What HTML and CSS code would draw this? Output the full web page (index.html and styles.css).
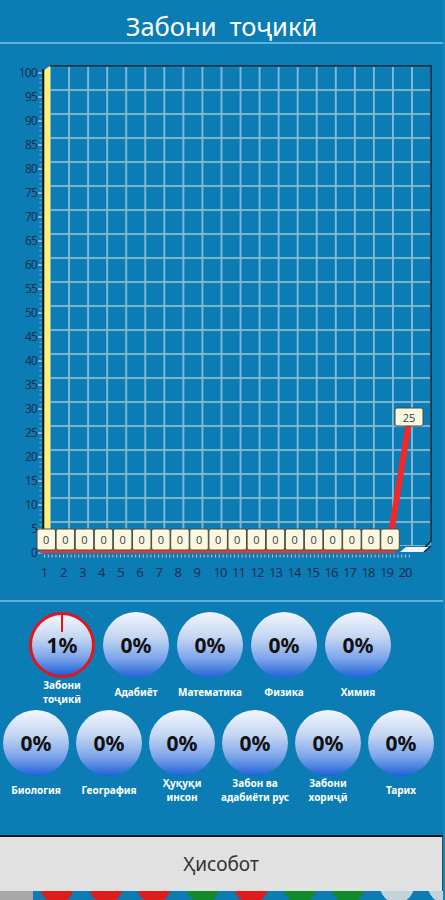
FILE: index.html
```html
<!DOCTYPE html>
<html>
<head>
<meta charset="utf-8">
<title>Забони тоҷикӣ</title>
<link rel="stylesheet" href="styles.css">
</head>
<body>
	<div class="app">
		<header class="title-bar">
			<h1 class="title">Забони&nbsp; тоҷикӣ</h1>
		</header>

		<div class="chart">
			<svg class="chart-svg" width="443" height="556" viewBox="0 44 443 556">
				<defs>
					<pattern id="grid" patternUnits="userSpaceOnUse" x="49.1" y="65.1" width="19.05" height="24">
						<rect class="grid-line" x="0" y="0" width="1.8" height="24"/>
						<rect class="grid-line" x="0" y="0" width="19.05" height="1.8"/>
					</pattern>
				</defs>
				<!-- back wall -->
				<rect x="50" y="66" width="381" height="480" fill="url(#grid)"/>
				<path class="plot-border" d="M50 66 H431 V541 L425 547"/>

				<!-- left wall + axis -->
				<path class="wall" d="M44 70 L50 66 V546 L44 551 Z"/>
				<line class="axis" x1="43.3" y1="69" x2="43.3" y2="553"/>
				<line class="axis-minor" x1="40.5" y1="73" x2="40.5" y2="553"/>
				<path class="axis-major" d="M38 73h4M38 97h4M38 121h4M38 145h4M38 169h4M38 193h4M38 217h4M38 241h4M38 265h4M38 289h4M38 313h4M38 337h4M38 361h4M38 385h4M38 409h4M38 433h4M38 457h4M38 481h4M38 505h4M38 529h4M38 553h4"/>

				<text class="y-label" x="37" y="77">100</text>
				<text class="y-label" x="37" y="101">95</text>
				<text class="y-label" x="37" y="125">90</text>
				<text class="y-label" x="37" y="149">85</text>
				<text class="y-label" x="37" y="173">80</text>
				<text class="y-label" x="37" y="197">75</text>
				<text class="y-label" x="37" y="221">70</text>
				<text class="y-label" x="37" y="245">65</text>
				<text class="y-label" x="37" y="269">60</text>
				<text class="y-label" x="37" y="293">55</text>
				<text class="y-label" x="37" y="317">50</text>
				<text class="y-label" x="37" y="341">45</text>
				<text class="y-label" x="37" y="365">40</text>
				<text class="y-label" x="37" y="389">35</text>
				<text class="y-label" x="37" y="413">30</text>
				<text class="y-label" x="37" y="437">25</text>
				<text class="y-label" x="37" y="461">20</text>
				<text class="y-label" x="37" y="485">15</text>
				<text class="y-label" x="37" y="509">10</text>
				<text class="y-label" x="37" y="533">5</text>
				<text class="y-label" x="37" y="557">0</text>

				<!-- floor -->
				<rect class="series-base" x="40" y="548" width="356" height="5"/>
				<line class="x-ticks" x1="44" y1="556" x2="412" y2="556"/>
				<path class="floor" d="M400 552 H424 L430 547 H406 Z"/>
				<path class="plot-border" d="M424 552 L431 546"/>

				<text class="x-label" x="44" y="577">1</text>
				<text class="x-label" x="63.1" y="577">2</text>
				<text class="x-label" x="82.2" y="577">3</text>
				<text class="x-label" x="101.3" y="577">4</text>
				<text class="x-label" x="120.4" y="577">5</text>
				<text class="x-label" x="139.5" y="577">6</text>
				<text class="x-label" x="158.6" y="577">7</text>
				<text class="x-label" x="177.7" y="577">8</text>
				<text class="x-label" x="196.8" y="577">9</text>
				<text class="x-label" x="220" y="577">10</text>
				<text class="x-label" x="238.5" y="577">11</text>
				<text class="x-label" x="257" y="577">12</text>
				<text class="x-label" x="275.5" y="577">13</text>
				<text class="x-label" x="294" y="577">14</text>
				<text class="x-label" x="312.5" y="577">15</text>
				<text class="x-label" x="331" y="577">16</text>
				<text class="x-label" x="349.5" y="577">17</text>
				<text class="x-label" x="368" y="577">18</text>
				<text class="x-label" x="386.5" y="577">19</text>
				<text class="x-label" x="405" y="577">20</text>

				<!-- series -->
				<line class="series-rise" x1="391" y1="534" x2="409" y2="422"/>

				<g class="box" transform="translate(37 529)"><rect width="18.5" height="21" rx="2"/><text x="9.25" y="14.5">0</text></g>
				<g class="box" transform="translate(56.1 529)"><rect width="18.5" height="21" rx="2"/><text x="9.25" y="14.5">0</text></g>
				<g class="box" transform="translate(75.2 529)"><rect width="18.5" height="21" rx="2"/><text x="9.25" y="14.5">0</text></g>
				<g class="box" transform="translate(94.3 529)"><rect width="18.5" height="21" rx="2"/><text x="9.25" y="14.5">0</text></g>
				<g class="box" transform="translate(113.4 529)"><rect width="18.5" height="21" rx="2"/><text x="9.25" y="14.5">0</text></g>
				<g class="box" transform="translate(132.5 529)"><rect width="18.5" height="21" rx="2"/><text x="9.25" y="14.5">0</text></g>
				<g class="box" transform="translate(151.6 529)"><rect width="18.5" height="21" rx="2"/><text x="9.25" y="14.5">0</text></g>
				<g class="box" transform="translate(170.7 529)"><rect width="18.5" height="21" rx="2"/><text x="9.25" y="14.5">0</text></g>
				<g class="box" transform="translate(189.8 529)"><rect width="18.5" height="21" rx="2"/><text x="9.25" y="14.5">0</text></g>
				<g class="box" transform="translate(208.9 529)"><rect width="18.5" height="21" rx="2"/><text x="9.25" y="14.5">0</text></g>
				<g class="box" transform="translate(228 529)"><rect width="18.5" height="21" rx="2"/><text x="9.25" y="14.5">0</text></g>
				<g class="box" transform="translate(247.1 529)"><rect width="18.5" height="21" rx="2"/><text x="9.25" y="14.5">0</text></g>
				<g class="box" transform="translate(266.2 529)"><rect width="18.5" height="21" rx="2"/><text x="9.25" y="14.5">0</text></g>
				<g class="box" transform="translate(285.3 529)"><rect width="18.5" height="21" rx="2"/><text x="9.25" y="14.5">0</text></g>
				<g class="box" transform="translate(304.4 529)"><rect width="18.5" height="21" rx="2"/><text x="9.25" y="14.5">0</text></g>
				<g class="box" transform="translate(323.5 529)"><rect width="18.5" height="21" rx="2"/><text x="9.25" y="14.5">0</text></g>
				<g class="box" transform="translate(342.6 529)"><rect width="18.5" height="21" rx="2"/><text x="9.25" y="14.5">0</text></g>
				<g class="box" transform="translate(361.7 529)"><rect width="18.5" height="21" rx="2"/><text x="9.25" y="14.5">0</text></g>
				<g class="box" transform="translate(380.8 529)"><rect width="18.5" height="21" rx="2"/><text x="9.25" y="14.5">0</text></g>
				<g class="box" transform="translate(395 408)"><rect width="28" height="18" rx="2"/><text x="14" y="13.5">25</text></g>
			</svg>
		</div>

		<div class="subjects">
			<div class="subject-row row-first">
				<div class="subject">
					<div class="gauge gauge-active">1%</div>
					<div class="subject-name">Забони<br>тоҷикӣ</div>
				</div>
				<div class="subject">
					<div class="gauge">0%</div>
					<div class="subject-name">Адабиёт</div>
				</div>
				<div class="subject">
					<div class="gauge">0%</div>
					<div class="subject-name">Математика</div>
				</div>
				<div class="subject">
					<div class="gauge">0%</div>
					<div class="subject-name">Физика</div>
				</div>
				<div class="subject">
					<div class="gauge">0%</div>
					<div class="subject-name">Химия</div>
				</div>
			</div>
			<div class="subject-row row-second">
				<div class="subject">
					<div class="gauge">0%</div>
					<div class="subject-name">Биология</div>
				</div>
				<div class="subject">
					<div class="gauge">0%</div>
					<div class="subject-name">География</div>
				</div>
				<div class="subject">
					<div class="gauge">0%</div>
					<div class="subject-name">Ҳуқуқи<br>инсон</div>
				</div>
				<div class="subject">
					<div class="gauge">0%</div>
					<div class="subject-name">Забон ва<br>адабиёти рус</div>
				</div>
				<div class="subject">
					<div class="gauge">0%</div>
					<div class="subject-name">Забони<br>хориҷӣ</div>
				</div>
				<div class="subject">
					<div class="gauge">0%</div>
					<div class="subject-name">Тарих</div>
				</div>
			</div>
		</div>

		<button class="report">Ҳисобот</button>

		<div class="tray">
			<div class="tray-gray"></div>
			<div class="tray-dots">
				<span class="dot dot-red"></span>
				<span class="dot dot-red"></span>
				<span class="dot dot-red"></span>
				<span class="dot dot-green"></span>
				<span class="dot dot-red"></span>
				<span class="dot dot-green"></span>
				<span class="dot dot-green"></span>
				<span class="dot dot-gray"></span>
				<span class="dot dot-gray"></span>
			</div>
		</div>
	</div>
</body>
</html>
```

FILE: styles.css
```css
body {
	margin: 0;
	background: #1587bb;
	font-family: "Noto Sans", "Open Sans", sans-serif;
}

.app {
	width: 443px;
	background: #0b7db4;
	display: flex;
	flex-direction: column;
}

/* header */
.title-bar {
	height: 44px;
	box-sizing: border-box;
	padding-top: 10px;
	border-bottom: 2px solid #5fb2db;
	text-align: center;
}

.title {
	margin: 0;
	font-size: 25.5px;
	font-weight: normal;
	line-height: 32px;
	color: #fff;
}

/* chart */
.chart {
	border-bottom: 2px solid #5fb2db;
}

.chart-svg {
	display: block;
}

.grid-line {
	fill: #86bcd8;
}

.plot-border {
	fill: none;
	stroke: #10202f;
	stroke-width: 1.5;
}

.wall {
	fill: #fff27c;
}

.axis {
	stroke: #111;
	stroke-width: 2;
}

.axis-minor {
	stroke: #8fb3c9;
	stroke-width: 2;
	stroke-dasharray: 1 3.8;
}

.axis-major {
	stroke: #9cbdd1;
	stroke-width: 1.5;
}

.y-label {
	font-family: "Open Sans", sans-serif;
	font-size: 12px;
	letter-spacing: -0.8px;
	fill: #1b2a4a;
	text-anchor: end;
}

.x-label {
	font-family: "Open Sans", sans-serif;
	font-size: 13px;
	letter-spacing: -1px;
	fill: #1b2a4a;
	text-anchor: middle;
}

.series-base {
	fill: #e03a3a;
}

.x-ticks {
	stroke: #b7c9d6;
	stroke-width: 3;
	stroke-dasharray: 1 2.8;
}

.floor {
	fill: #f4f4f4;
}

.series-rise {
	stroke: #f42828;
	stroke-width: 6;
}

.box rect {
	fill: #fbf8e2;
	stroke: #4b4b3e;
	stroke-width: 1;
}

.box text {
	font-family: "Open Sans", sans-serif;
	font-size: 11px;
	fill: #3a3a3a;
	text-anchor: middle;
}

/* subjects */
.subjects {
	height: 233px;
	box-sizing: border-box;
	padding-top: 10px;
	display: flex;
	flex-direction: column;
	gap: 4px;
}

.subject-row {
	display: flex;
}

.row-first {
	padding-left: 29px;
	gap: 8px;
}

.row-second {
	padding-left: 3px;
	gap: 7px;
}

.subject {
	width: 66px;
	display: flex;
	flex-direction: column;
	align-items: center;
}

.gauge {
	width: 66px;
	height: 66px;
	box-sizing: border-box;
	border-radius: 50%;
	background: linear-gradient(#f3f6fd 0%, #c4d6f3 38%, #7ea6ea 70%, #1f62d9 100%);
	display: flex;
	align-items: center;
	justify-content: center;
	font-size: 21px;
	font-weight: 700;
	color: #111;
	position: relative;
}

.gauge-active {
	border: 3px solid #e3151a;
}

.gauge-active::before {
	content: '';
	position: absolute;
	left: 50%;
	top: 0;
	width: 2px;
	margin-left: -1px;
	height: 17px;
	background: #e3151a;
}

.subject-name {
	height: 28px;
	display: flex;
	align-items: center;
	text-align: center;
	white-space: nowrap;
	font-size: 10px;
	font-weight: 700;
	line-height: 14px;
	color: #fff;
}

/* bottom */
.report {
	display: block;
	width: 443px;
	height: 56px;
	margin: 0;
	padding: 0;
	border: none;
	border-top: 2px solid #151515;
	border-right: 1px solid #444;
	background: #e1e1e1;
	font-family: "Noto Sans", "Open Sans", sans-serif;
	font-size: 19px;
	color: #333;
}

.tray {
	height: 9px;
	display: flex;
	overflow: hidden;
}

.tray-gray {
	width: 33px;
	flex: none;
	background: #a8a8a8;
}

.tray-dots {
	display: flex;
	gap: 14.5px;
	padding-left: 7px;
}

.dot {
	width: 34px;
	height: 34px;
	flex: none;
	margin-top: -22px;
	border-radius: 50%;
}

.dot-red {
	background: #e01b1b;
}

.dot-green {
	background: #118a2c;
}

.dot-gray {
	background: #c3d3da;
}
```
